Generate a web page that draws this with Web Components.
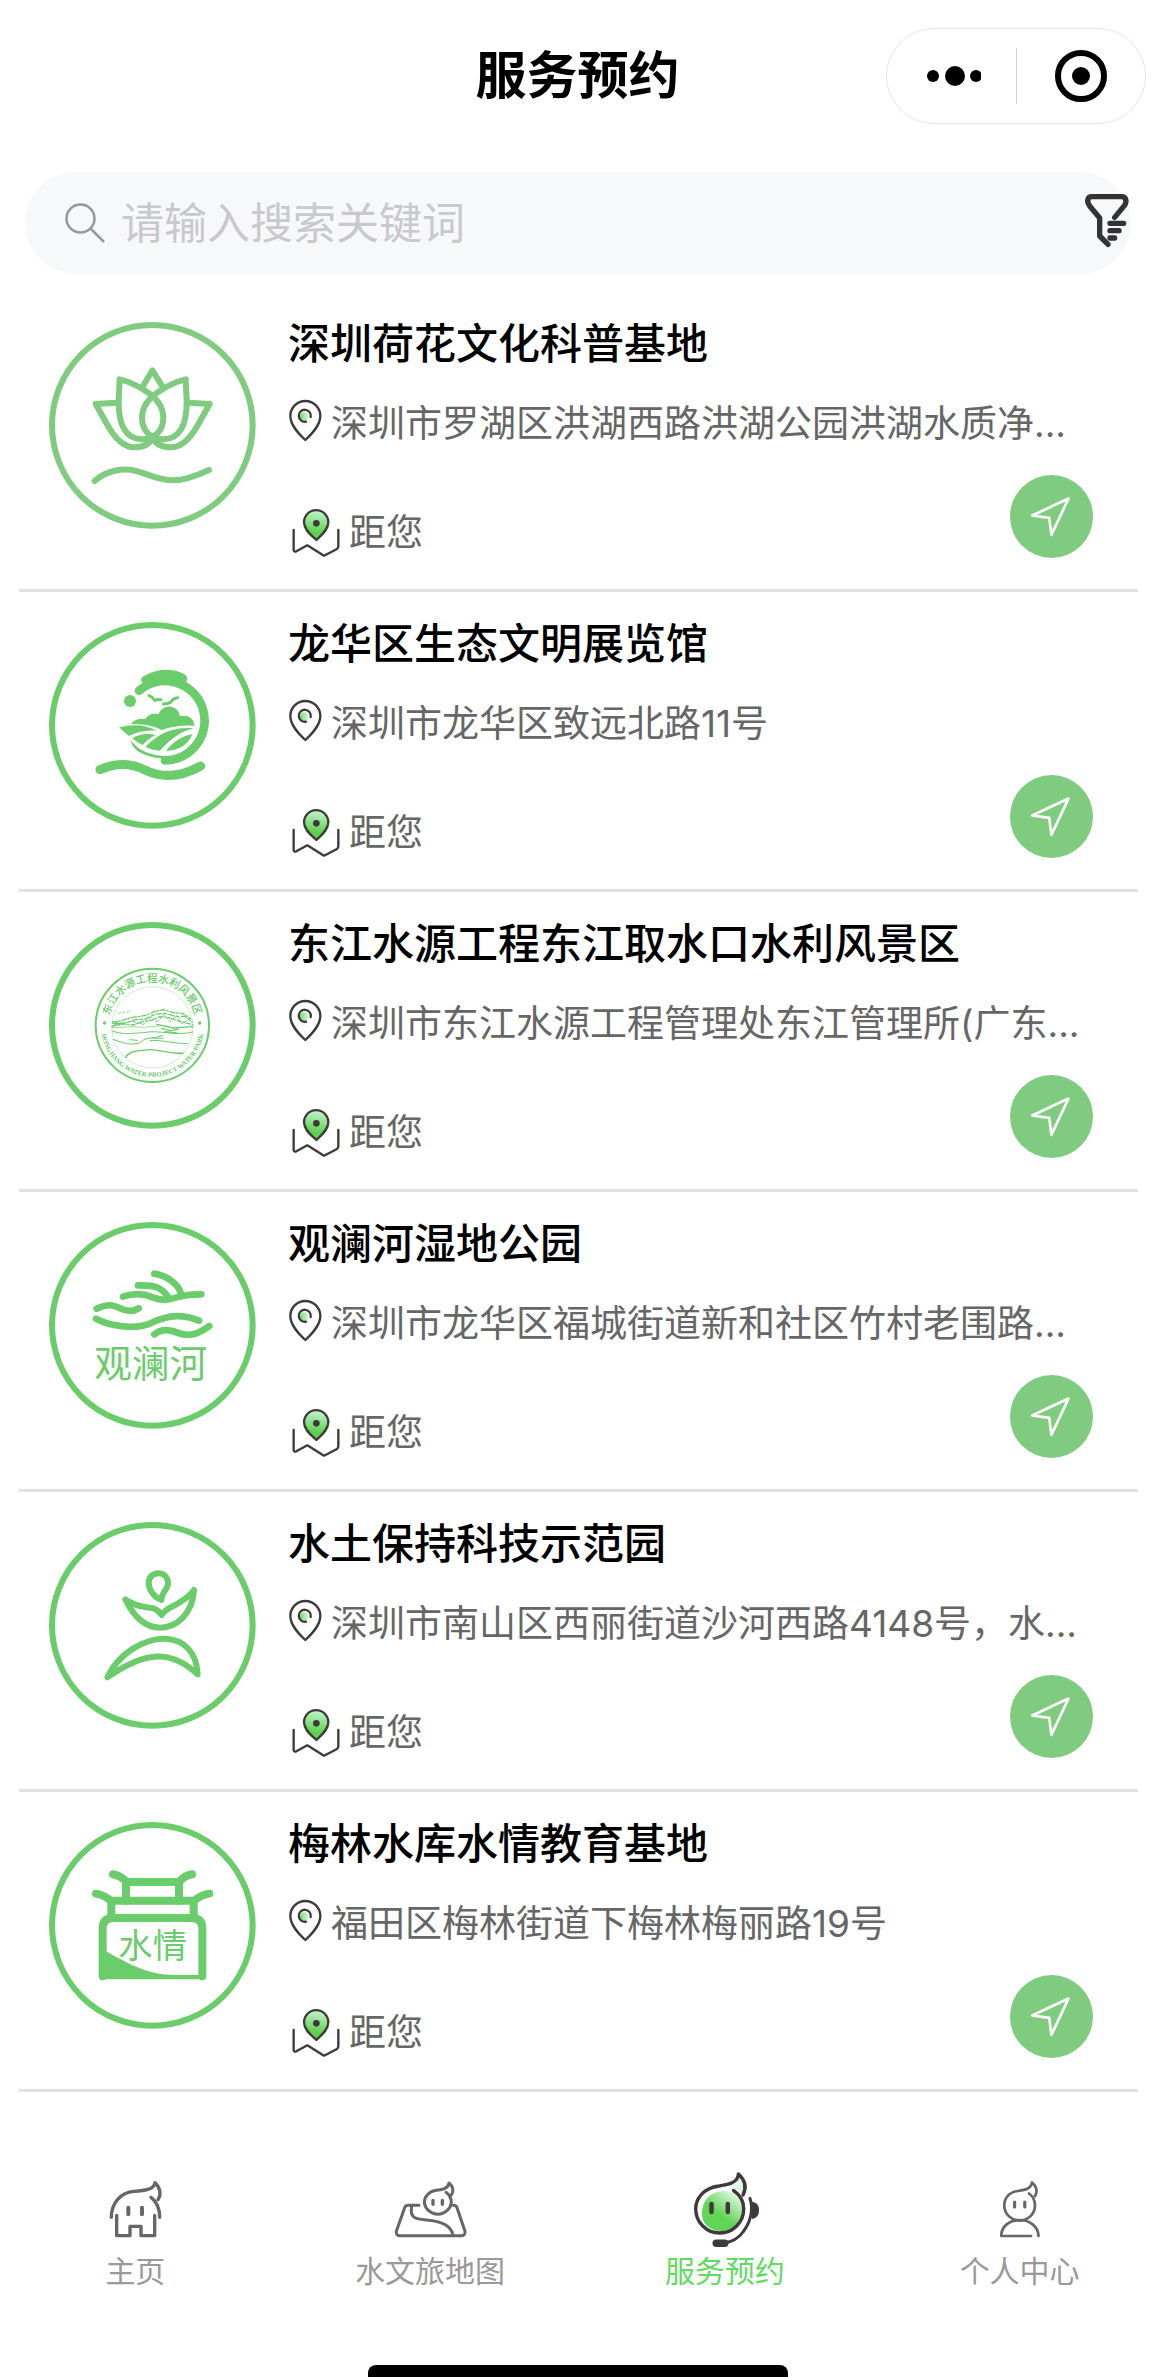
<!DOCTYPE html>
<html lang="zh-CN">
<head>
<meta charset="utf-8">
<meta name="viewport" content="width=device-width, initial-scale=1">
<title>服务预约</title>
<style>
    body {
        margin: 0;
        background: #fff;
        color: #000;
        font-family: Inter, "Noto Sans CJK SC", sans-serif;
    }
</style>
</head>
<body>
<v-app></v-app>

<script>
const logos = {
    lotus: `<svg viewBox="88 95 621 621" fill="none" stroke="#7fcb80" stroke-width="18" stroke-linecap="round" stroke-linejoin="round" aria-hidden="true">
        <circle cx="398" cy="405" r="301"/>
        <path d="M368 291L398 240L430 291"/>
        <path d="M300 267Q335 275 370 297C410 320 431 350 431 383C431 420 405 448 366 447C315 445 296 400 297 330Z"/>
        <path d="M498 267Q463 275 428 297C388 320 367 350 367 383C367 420 393 448 432 447C483 445 502 400 501 330Z"/>
        <path d="M290 337L228 341L262 402C290 452 315 471 343 471C372 471 390 460 399 443"/>
        <path d="M508 337L570 341L536 402C508 452 483 471 455 471C426 471 408 460 399 443"/>
        <path d="M225 572C260 540 310 532 350 542C390 552 415 570 460 570C500 570 540 552 568 539"/>
    </svg>`,
    valley: `<svg viewBox="57 66 621 621" fill="none" stroke="#6acc6b" stroke-linecap="round" stroke-linejoin="round" aria-hidden="true">
        <circle cx="367" cy="376" r="301" stroke-width="18"/>
        <path d="M327 272A119 119 0 1 1 405 481" stroke-width="26"/>
        <path d="M210 509C260 487 305 490 345 510C400 537 455 530 512 498" stroke-width="27"/>
        <path d="M357 287Q368 291 374 301Q382 297 393 299M400 312Q413 311 422 307Q428 295 443 293" stroke-width="9"/>
        <g fill="#6acc6b" stroke="none">
            <path d="M333 240Q334 231 346 226Q405 195 462 222Q473 228 471 240L465 252Q405 225 342 252Q333 248 333 240Z"/>
            <circle cx="300" cy="303" r="18"/>
            <path d="M302 372Q318 354 346 357Q358 337 386 342A33 33 0 0 1 450 348Q490 344 494 377Q440 373 395 390Q360 370 302 372Z"/>
            <path d="M267 382C310 371 350 374 381 393C350 389 320 396 297 408Z"/>
            <path d="M307 415C330 400 355 400 378 405C360 413 350 423 338 435Q320 428 307 415Z"/>
            <path d="M347 440C385 400 430 380 491 385C445 396 415 425 390 452Q365 450 347 440Z"/>
            <path d="M408 453C430 425 455 408 487 403C475 435 445 452 408 453Z"/>
            <path d="M302 420C325 452 360 467 407 468L400 476C350 472 308 455 302 420Z"/>
        </g>
    </svg>`,
    dongjiang: `<svg viewBox="57 66 621 621" fill="none" stroke="#6acc6b" stroke-linecap="round" aria-hidden="true">
        <circle cx="367" cy="376" r="301" stroke-width="18"/>
        <circle cx="367" cy="376" r="170" stroke-width="6"/>
        <circle cx="367" cy="382" r="122" stroke-width="1"/>
        <path id="top" d="M236 376A131 131 0 0 1 498 376" stroke="none"/>
        <path id="bottom" d="M212 376A155 155 0 0 0 522 376" stroke="none"/>
        <g fill="#6acc6b" stroke="none" text-anchor="middle">
            <text font-size="32" font-weight="500" font-family="Noto Sans CJK SC, sans-serif"><textPath href="#top" startOffset="50%">东江水源工程水利风景区</textPath></text>
            <text font-size="20" font-weight="700" font-family="Liberation Serif, serif"><textPath href="#bottom" startOffset="50%">DONGJIANG WATER PROJECT WATER PARK</textPath></text>
            <circle cx="224" cy="369" r="5"/>
            <circle cx="509" cy="369" r="5"/>
        </g>
        <path d="M264 341L272 338M277 340L284 336M290 337L298 334" stroke-width="2"/>
        <path d="M247 366L275 362L300 353L326 350L350 345L376 334L402 329L430 338L457 340L482 356" stroke-width="4" stroke-dasharray="14 5 5 6"/>
        <path d="M255 373L292 367L318 358L345 358L374 343L408 340L438 350L465 349L486 366" stroke-width="4" stroke-dasharray="9 7 16 6"/>
        <path d="M246 379L280 372L310 375L340 364L366 361L388 350L412 352L442 362L488 374" stroke-width="4" stroke-dasharray="12 6 4 7"/>
        <path d="M310 365L342 373L365 351L380 366L402 344L420 365L440 347L455 371L475 360" stroke-width="3" stroke-dasharray="8 6"/>
        <path d="M248 370H278M258 365L270 375M380 373L430 384L488 380M395 385L420 392L445 388M405 395L440 399" stroke-width="4"/>
        <path d="M247 384L300 380L340 382L388 378" stroke-width="2"/>
        <path d="M247 393C280 405 300 400 340 398C385 388 440 410 488 396" stroke-width="3"/>
        <path d="M249 418C270 425 285 433 310 432C345 430 328 414 370 414L398 407M360 422C390 418 430 431 473 431M300 419L322 421M366 414L400 415" stroke-width="3"/>
        <path d="M287 472C298 452 325 453 360 449C390 447 412 464 459 459" stroke-width="4"/>
    </svg>`,
    guanlan: `<svg viewBox="57 66 621 621" fill="none" stroke="#6acc6b" stroke-width="20" stroke-linecap="round" stroke-linejoin="round" aria-hidden="true">
        <circle cx="367" cy="376" r="301" stroke-width="18"/>
        <path d="M373 221C405 225 445 250 453 282"/>
        <path d="M324 256C375 255 395 262 413 290"/>
        <path d="M279 290C315 278 340 280 368 292C405 307 425 295 460 287Q485 283 514 283"/>
        <path d="M200 326C235 310 250 315 270 325C290 335 310 335 326 325"/>
        <path d="M198 356C240 380 320 390 365 368C420 343 460 343 507 362"/>
        <path d="M373 403C400 382 425 392 445 399C480 411 505 402 538 378"/>
        <text x="362" y="531" font-size="113" text-anchor="middle" fill="#6acc6b" stroke="none">观澜河</text>
    </svg>`,
    sprout: `<svg viewBox="57 66 621 621" fill="none" stroke="#6acc6b" stroke-width="18" stroke-linecap="round" stroke-linejoin="round" aria-hidden="true">
        <circle cx="367" cy="376" r="301"/>
        <path d="M394 300C372 292 356 270 356 248C356 232 368 220 385 220C402 220 414 232 414 250C414 270 394 275 394 300Z"/>
        <path d="M286 298C310 318 345 321 370 325Q387 332 395 345Q405 330 430 318C455 305 475 293 492 270C488 340 440 383 390 383C345 382 312 352 286 298Z"/>
        <path d="M232 532C265 462 340 415 405 416C465 418 500 460 503 523C425 450 350 450 232 532Z"/>
    </svg>`,
    meilin: `<svg viewBox="57 66 621 621" fill="none" stroke="#6acc6b" stroke-width="24" stroke-linecap="round" aria-hidden="true">
        <circle cx="367" cy="376" r="301" stroke-width="18"/>
        <path d="M249 223Q270 226 290 246H447Q465 226 486 223M288 246V302M447 246V302"/>
        <path d="M198 281Q222 285 242 302H493Q513 285 538 281M244 302V353M491 302V353"/>
        <path d="M218 529V385Q218 354 250 354H485Q517 354 517 385V529"/>
        <path d="M220 450C290 485 340 525 440 525H517V538H218Z" fill="#6acc6b" stroke="none"/>
        <text x="368" y="473" font-size="103" text-anchor="middle" fill="#6acc6b" stroke="none">水情</text>
    </svg>`
};

const tabIcons = {
    home: `<svg width="56" height="80" viewBox="144 265 168 240" fill="none" stroke="#666" stroke-width="10" stroke-linecap="round" stroke-linejoin="round" aria-hidden="true">
        <path d="M157 413C157 370 185 338 225 335C255 333 285 330 288 309C303 322 308 345 297 360M276 353C292 365 302 385 302 413"/>
        <path d="M173 407V468H213V440H246V468H287V407"/>
        <path d="M208 384V404M249 384V404" stroke-width="12"/>
    </svg>`,
    map: `<svg width="74" height="80" viewBox="1000 265 222 240" fill="none" stroke="#666" stroke-width="9" stroke-linecap="round" stroke-linejoin="round" aria-hidden="true">
        <path d="M1078 377H1046Q1038 377 1035 384L1010 455Q1008 467 1019 468H1205Q1218 467 1216 455L1192 384Q1189 377 1181 377"/>
        <path d="M1056 380C1050 415 1065 418 1100 421C1150 425 1175 440 1180 466"/>
        <path d="M1168 310C1166 328 1145 330 1130 332C1108 335 1094 350 1094 369A41 41 0 0 0 1175 369C1175 357 1170 346 1159 338M1168 310C1182 322 1182 335 1175 346"/>
        <path d="M1120 362V374M1148 362V374" stroke-width="10"/>
    </svg>`,
    service: `<svg width="68" height="80" viewBox="91 88 68 80" fill="none" stroke="#3e3a39" stroke-width="3.4" stroke-linecap="round" stroke-linejoin="round" aria-hidden="true">
        <defs><linearGradient id="face" x1="0.85" y1="0.05" x2="0.45" y2="0.6">
            <stop offset="0" stop-color="#e2f8e6"/><stop offset="1" stop-color="#62d456"/>
        </linearGradient></defs>
        <path d="M139 97C144 101 144 109 142 115C139 110 135 108 130 107Q138 104 139 97Z" fill="#dff5ec" stroke="none"/>
        <path d="M102 134C102 120 111 111 124 111C135 111 142 120 142 131C142 142 133 151 121 151C110 151 102 144 102 134Z" fill="url(#face)" stroke="none"/>
        <path d="M138.400 94C138 103 128 104.500 119 106C104 108 95.700 118 95.700 129A24 24 0 0 0 143.700 129C143.700 122 140 115 133.500 110.500M138.400 94C145 100 147 107 143 115"/>
        <path d="M111.500 124V132M127.800 124V132" stroke-width="4.500"/>
        <path d="M150 118.500C154 130 150 143 143 152C138 159 132 162 124 163" stroke-width="3"/>
        <path d="M152 122C157 122 159 126 159 130C159 135 157 138 152 139Z" fill="#3e3a39" stroke="none"/>
        <rect x="112.500" y="159.500" width="16" height="7.500" rx="3.700" fill="#3e3a39" stroke="none"/>
    </svg>`,
    user: `<svg width="68" height="80" viewBox="387 88 68 80" fill="none" stroke="#666" stroke-width="2.700" stroke-linecap="round" stroke-linejoin="round" aria-hidden="true">
        <path d="M433 102.500C432 109 426 110 419 111C410 112 405.300 118 405.300 125.500A15.300 15 0 0 0 436 125.500C436 120 433.500 116 430 113.500M433 102.500C438 107 439 111 436 116"/>
        <path d="M415.600 122V127M425.800 122V127" stroke-width="3.200"/>
        <path d="M432 156H402.300C402 147 410 140 420.500 140C431 140 439.500 147 439.500 156"/>
    </svg>`
};

const sites = [
    {logo: 'lotus', name: '深圳荷花文化科普基地', address: '深圳市罗湖区洪湖西路洪湖公园洪湖水质净...'},
    {logo: 'valley', name: '龙华区生态文明展览馆', address: '深圳市龙华区致远北路11号'},
    {logo: 'dongjiang', name: '东江水源工程东江取水口水利风景区', address: '深圳市东江水源工程管理处东江管理所(广东...'},
    {logo: 'guanlan', name: '观澜河湿地公园', address: '深圳市龙华区福城街道新和社区竹村老围路...'},
    {logo: 'sprout', name: '水土保持科技示范园', address: '深圳市南山区西丽街道沙河西路4148号，水...'},
    {logo: 'meilin', name: '梅林水库水情教育基地', address: '福田区梅林街道下梅林梅丽路19号'}
];

customElements.define('v-title-bar', class extends HTMLElement {
    constructor() {
        super();
        const shadowRoot = this.attachShadow({mode: 'open'});
        shadowRoot.innerHTML = `<style>
            :host {
                display: grid;
                grid-template-columns: 1fr auto 1fr;
                align-items: center;
                height: 152px;
                padding: 0 9px;
            }
            h1 {
                grid-column: 2;
                margin: 0;
                font-size: 51px;
                line-height: 60px;
                font-weight: 600;
            }
            .capsule {
                justify-self: end;
                display: flex;
                align-items: center;
                box-sizing: border-box;
                width: 260px;
                height: 96px;
                border: 1px solid #e6e6e6;
                border-radius: 48px;
            }
            button {
                flex: 1;
                display: flex;
                align-items: center;
                justify-content: center;
                height: 100%;
                padding: 0;
                border: 0;
                background: none;
            }
            .divider {
                width: 1px;
                height: 56px;
                background: #d0d0d0;
            }
        </style>
        <h1><slot></slot></h1>
        <div class="capsule">
            <button class="btnMore" aria-label="更多">
                <svg width="60" height="24" viewBox="0 0 60 24" aria-hidden="true">
                    <circle cx="12" cy="12" r="6"/><circle cx="34" cy="12" r="10"/><circle cx="55" cy="12" r="6"/>
                </svg>
            </button>
            <span class="divider"></span>
            <button class="btnClose" aria-label="关闭">
                <svg width="54" height="54" viewBox="0 0 54 54" aria-hidden="true">
                    <circle cx="27" cy="27" r="23" fill="none" stroke="#000" stroke-width="6"/><circle cx="27" cy="27" r="9"/>
                </svg>
            </button>
        </div>`;
    }
});

customElements.define('v-search', class extends HTMLElement {
    constructor() {
        super();
        const shadowRoot = this.attachShadow({mode: 'open'});
        shadowRoot.innerHTML = `<style>
            :host {
                display: flex;
                align-items: center;
                height: 102px;
                margin: 20px 24px 18px 25px;
                padding-left: 40px;
                border-radius: 51px;
                background: #f7f8fa;
            }
            label {
                flex: 1;
                display: flex;
                align-items: center;
                gap: 16px;
            }
            input {
                flex: 1;
                min-width: 0;
                height: 60px;
                padding: 0;
                border: 0;
                outline: 0;
                background: none;
                color: #323233;
                font-family: inherit;
                font-size: 43px;
            }
            input::placeholder {
                color: #c8c9cc;
            }
            button {
                display: flex;
                padding: 0;
                border: 0;
                background: none;
            }
        </style>
        <label>
            <svg width="40" height="40" viewBox="0 0 40 40" fill="none" stroke="#969799" stroke-width="2.500" aria-hidden="true">
                <circle cx="15.500" cy="15.500" r="14"/><path d="M26 26L39 39"/>
            </svg>
            <input type="text" placeholder="请输入搜索关键词" aria-label="搜索">
        </label>
        <button class="btnFilter" aria-label="筛选">
            <svg width="48" height="60" viewBox="130 99 144 180" fill="none" stroke="#333" stroke-width="16" stroke-linecap="round" stroke-linejoin="round" aria-hidden="true">
                <path d="M225 172L254 137Q262 126 257 115Q254 110 247 110H156Q147 110 145 117Q142 127 150 138L180 174V228L205 253"/>
                <path d="M211 190H252M211 212H238M211 234H225"/>
            </svg>
        </button>`;
    }
});

customElements.define('v-site', class extends HTMLElement {
    constructor() {
        super();
        const shadowRoot = this.attachShadow({mode: 'open'});
        shadowRoot.innerHTML = `<style>
            :host {
                display: flex;
                gap: 32px;
                margin: 0 17px 0 19px;
                padding: 27px 45px 31px 30px;
                border-bottom: 3px solid #e2e2e2;
            }
            .logo {
                flex: none;
                width: 207px;
                height: 207px;
                margin-top: 3px;
            }
            .logo svg {
                display: block;
                width: 100%;
                height: 100%;
            }
            .info {
                flex: 1;
                min-width: 0;
                display: flex;
                flex-direction: column;
                gap: 26px;
            }
            h2 {
                margin: 0 0 4px;
                font-size: 42px;
                line-height: 50px;
                font-weight: 500;
            }
            p {
                display: flex;
                align-items: flex-start;
                gap: 8px;
                margin: 0;
                color: #666;
                font-size: 37px;
                line-height: 50px;
                white-space: nowrap;
            }
            p svg {
                flex: none;
            }
            .bottom {
                display: flex;
                align-items: flex-end;
                justify-content: space-between;
            }
            .distance {
                padding-left: 3px;
            }
            button {
                display: flex;
                padding: 0;
                border: 0;
                border-radius: 50%;
                background: #7fcb80;
            }
        </style>
        <div class="logo"></div>
        <div class="info">
            <h2><slot name="name"></slot></h2>
            <p>
                <svg width="35" height="43" viewBox="54 57 105 129" fill="none" stroke="#3e3a39" stroke-width="7" stroke-linecap="round" stroke-linejoin="round" aria-hidden="true">
                    <defs><linearGradient id="dot"><stop offset="0" stop-color="#6fdc72"/><stop offset="1" stop-color="#d8f6de"/></linearGradient></defs>
                    <circle cx="103" cy="110" r="13" fill="url(#dot)" stroke="none"/>
                    <path d="M106 180C88 163 61 137 61 108A45 45 0 0 1 151 108C151 137 124 163 106 180Z"/>
                    <path d="M122 111A18 18 0 1 0 108 125"/>
                </svg>
                <slot name="address"></slot>
            </p>
            <div class="bottom">
                <p class="distance">
                    <svg width="50" height="50" viewBox="64 380 150 150" fill="none" stroke="#3e3a39" stroke-width="7" stroke-linecap="round" stroke-linejoin="round" aria-hidden="true">
                        <defs><linearGradient id="pin" x1="0.5" y1="0" x2="0.4" y2="1"><stop offset="0" stop-color="#c8f3d0"/><stop offset="0.75" stop-color="#5ad04e"/></linearGradient></defs>
                        <path d="M140 476C126 463 103 446 103 423A36.500 36.500 0 0 1 176 423C176 446 153 463 140 476Z" fill="url(#pin)"/>
                        <circle cx="140" cy="426" r="10" fill="#3e3a39" stroke="none"/>
                        <path d="M72 446V506Q73 513 80 510L113 492L163 523L202 503Q206 500 206 495V446"/>
                    </svg>
                    <span>距您</span>
                </p>
                <button class="btnNavigate" aria-label="导航">
                    <svg width="83" height="83" viewBox="929 525 250 250" fill="none" stroke="#fff" stroke-width="8" stroke-linejoin="round" aria-hidden="true">
                        <path d="M996 647L1105 596L1054 705L1047 654Z"/>
                    </svg>
                </button>
            </div>
        </div>`;
        this.logo = shadowRoot.querySelector('.logo');
    }

    connectedCallback() {
        this.logo.innerHTML = logos[this.getAttribute('logo')];
    }
});

customElements.define('v-tab', class extends HTMLElement {
    constructor() {
        super();
        const shadowRoot = this.attachShadow({mode: 'open'});
        shadowRoot.innerHTML = `<style>
            :host {
                display: block;
                flex: 1;
                color: #999;
            }
            :host([active]) {
                color: #62d962;
            }
            a {
                display: flex;
                flex-direction: column;
                align-items: center;
                color: inherit;
                font-size: 30px;
                line-height: 46px;
                text-decoration: none;
            }
            .icon {
                display: flex;
            }
        </style>
        <a href="#"><span class="icon"></span><slot></slot></a>`;
        this.icon = shadowRoot.querySelector('.icon');
    }

    connectedCallback() {
        this.icon.innerHTML = tabIcons[this.getAttribute('icon')];
    }
});

customElements.define('v-tab-bar', class extends HTMLElement {
    constructor() {
        super();
        const shadowRoot = this.attachShadow({mode: 'open'});
        shadowRoot.innerHTML = `<style>
            :host {
                display: block;
                padding-top: 76px;
                overflow: hidden;
            }
            nav {
                display: flex;
                margin: 0 -12px 71px;
            }
            .indicator {
                width: 420px;
                height: 12px;
                margin: 0 auto;
                border-radius: 8px 8px 0 0;
                background: #000;
            }
        </style>
        <nav><slot></slot></nav>
        <div class="indicator"></div>`;
    }
});

customElements.define('v-app', class extends HTMLElement {
    constructor() {
        super();
        const shadowRoot = this.attachShadow({mode: 'open'});
        shadowRoot.innerHTML = `<style>
            :host {
                display: flex;
                flex-direction: column;
                min-height: 100vh;
            }
            v-tab-bar {
                margin-top: auto;
            }
        </style>
        <v-title-bar>服务预约</v-title-bar>
        <v-search></v-search>
        <main></main>
        <v-tab-bar>
            <v-tab icon="home">主页</v-tab>
            <v-tab icon="map">水文旅地图</v-tab>
            <v-tab icon="service" active>服务预约</v-tab>
            <v-tab icon="user">个人中心</v-tab>
        </v-tab-bar>`;

        this.list = shadowRoot.querySelector('main');
        this.loadSites(sites);
    }

    loadSites(sites) {
        sites.forEach((site) => {
            const siteElement = document.createElement('v-site');
            siteElement.setAttribute('logo', site.logo);
            siteElement.innerHTML = `<span slot="name">${site.name}</span><span slot="address">${site.address}</span>`;
            this.list.appendChild(siteElement);
        });
    }
});
</script>
</body>
</html>
